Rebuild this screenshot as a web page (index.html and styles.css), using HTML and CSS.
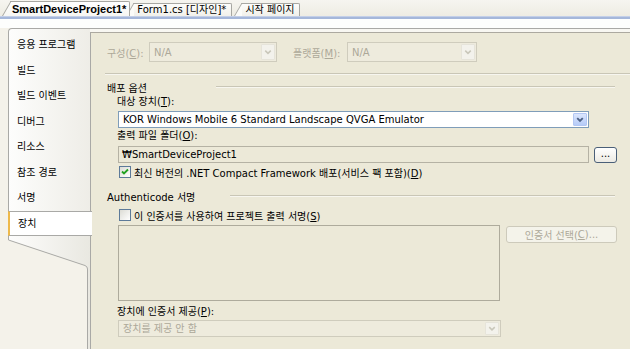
FILE: index.html
```html
<!DOCTYPE html>
<html lang="ko">
<head>
  <meta charset="UTF-8" />
  <title>SmartDeviceProject1 - 장치</title>
  <link rel="stylesheet" href="styles.css">
</head>
<body>
  <!-- 문서 탭 -->
  <div class="tabs">
    <div class="tab active">SmartDeviceProject1*</div>
    <div class="tab tab-form">Form1.cs [디자인]*</div>
    <div class="tab tab-start">시작 페이지</div>
  </div>
  <div class="tabline"></div>
  <div class="band"></div>

  <div class="frame">
    <!-- 왼쪽 속성 페이지 목록 -->
    <nav class="sidebar">
      <div class="navlist">
        <div class="navitem">응용 프로그램</div>
        <div class="navitem">빌드</div>
        <div class="navitem">빌드 이벤트</div>
        <div class="navitem">디버그</div>
        <div class="navitem">리소스</div>
        <div class="navitem">참조 경로</div>
        <div class="navitem">서명</div>
        <div class="navitem selected">장치</div>
      </div>
      <svg class="navtail" width="82" height="113" viewBox="0 0 82 113">
        <defs>
          <linearGradient id="tailbg" x1="0" x2="1" y1="0" y2="0">
            <stop offset="0" stop-color="#fdfdfc"/>
            <stop offset="1" stop-color="#e9e8e1"/>
          </linearGradient>
        </defs>
        <path d="M0,0 H82 V113 H79.5 V33 Q79.5,30.5 77,29.5 L0.5,4 Z" fill="url(#tailbg)"/>
        <path d="M0.5,0 V4 L77,29.5 Q79.5,30.5 79.5,33 V113" fill="none" stroke="#a9a9a6"/>
      </svg>
    </nav>

    <!-- 장치 페이지 -->
    <div class="content">
      <div class="panel">
        <div class="config-row">
          <span class="cfg-label disabled">구성(<u>C</u>):</span>
          <div class="combo combo-disabled combo-cfg">
            <span class="combo-text">N/A</span>
            <span class="combo-btn">
              <svg width="13" height="14" viewBox="0 0 13 14"><path d="M3.5,5.5 L6.5,8.5 L9.5,5.5" fill="none" stroke="#c9c7ba" stroke-width="1.6"/></svg>
            </span>
          </div>
          <span class="cfg-label cfg-label-wide disabled">플랫폼(<u>M</u>):</span>
          <div class="combo combo-disabled combo-plat">
            <span class="combo-text">N/A</span>
            <span class="combo-btn">
              <svg width="13" height="14" viewBox="0 0 13 14"><path d="M3.5,5.5 L6.5,8.5 L9.5,5.5" fill="none" stroke="#c9c7ba" stroke-width="1.6"/></svg>
            </span>
          </div>
        </div>

        <div class="sep"></div>

        <section class="group">
          <div class="group-title">
            <span class="title-text title-deploy">배포 옵션</span>
            <span class="rule"></span>
          </div>
          <div class="group-body">
            <span class="field-label">대상 장치(<u>T</u>):</span>
            <div class="combo combo-device">
              <span class="combo-text">KOR Windows Mobile 6 Standard Landscape QVGA Emulator</span>
              <span class="combo-btn combo-btn-blue">
                <svg width="13" height="15" viewBox="0 0 13 15"><path d="M3.5,6 L6.5,9 L9.5,6" fill="none" stroke="#4d6185" stroke-width="2"/></svg>
              </span>
            </div>

            <span class="field-label label-folder">출력 파일 폴더(<u>O</u>):</span>
            <div class="folder-row">
              <div class="textbox">₩SmartDeviceProject1</div>
              <div class="btn btn-browse">...</div>
            </div>

            <div class="check-row check-deploy">
              <span class="checkbox checked">
                <svg width="10" height="10" viewBox="0 0 10 10"><path d="M2,4.5 L4,6.5 L8,2.5" fill="none" stroke="#21a121" stroke-width="1.8"/></svg>
              </span>
              <span>최신 버전의 .NET Compact Framework 배포(서비스 팩 포함)(<u>D</u>)</span>
            </div>
          </div>
        </section>

        <section class="group group-sign">
          <div class="group-title">
            <span class="title-text title-sign">Authenticode 서명</span>
            <span class="rule"></span>
          </div>
          <div class="group-body">
            <div class="check-row check-sign">
              <span class="checkbox"></span>
              <span>이 인증서를 사용하여 프로젝트 출력 서명(<u>S</u>)</span>
            </div>

            <div class="cert-row">
              <div class="cert-box"></div>
              <div class="btn btn-disabled btn-cert">인증서 선택(<u>C</u>)...</div>
            </div>

            <span class="field-label label-provide">장치에 인증서 제공(<u>P</u>):</span>
            <div class="combo combo-disabled combo-provide">
              <span class="combo-text">장치를 제공 안 함</span>
              <span class="combo-btn">
                <svg width="13" height="15" viewBox="0 0 13 15"><path d="M3.5,6 L6.5,9 L9.5,6" fill="none" stroke="#c9c7ba" stroke-width="1.6"/></svg>
              </span>
            </div>
          </div>
        </section>
      </div>
    </div>
  </div>
</body>
</html>
```

FILE: styles.css
```css
* {
  margin: 0;
  padding: 0;
  box-sizing: border-box;
}

body {
  width: 630px;
  height: 349px;
  overflow: hidden;
  background: #f4f2ea;
  font-family: "DejaVu Sans", "Noto Sans CJK KR", sans-serif;
  font-size: 10px;
  color: #000;
}

u {
  text-decoration: underline;
}

.disabled {
  color: #aca899;
}

/* 문서 탭 */
.tabs {
  position: relative;
  z-index: 0;
  height: 16px;
  display: flex;
  align-items: flex-end;
  padding-left: 10px;
  background: linear-gradient(#f6f5f0, #eeece3);
}

.tab {
  position: relative;
  height: 13px;
  line-height: 12px;
  padding: 0 5px 0 3px;
  margin-left: 4px;
  border-top: 1px solid #a7a7a2;
  border-right: 1px solid #a7a7a2;
  border-top-right-radius: 2px;
  background: linear-gradient(#fdfdfb, #f1f0ea);
  white-space: nowrap;
}

.tab::before {
  content: "";
  position: absolute;
  top: -1px;
  bottom: 0;
  left: -8px;
  width: 12px;
  border-top: 1px solid #a7a7a2;
  border-left: 1px solid #a7a7a2;
  background: #fbfbf8;
  transform: skewX(-30deg);
  transform-origin: bottom left;
  z-index: -1;
}

.tab.active {
  margin-left: 0;
  height: 15px;
  line-height: 14px;
  padding: 0 3px 0 2px;
  font-family: "Liberation Sans", "Noto Sans CJK KR", sans-serif;
  font-size: 11px;
  font-weight: bold;
  background: linear-gradient(#ffffff, #f6f6f2);
  z-index: 2;
}

.tab.active::before {
  background: linear-gradient(#ffffff, #f6f6f2);
}

.tab-start {
  margin-left: 10px;
  padding-right: 4px;
}

.tabline {
  height: 3px;
  background: #a5b7da;
  border-top: 1px solid #c3cfe8;
}

.band {
  height: 9px;
  background: #fdfefd;
}

/* 본문 */
.frame {
  display: flex;
  height: 321px;
}

.sidebar {
  width: 90px;
  padding-left: 8px;
  display: flex;
  flex-direction: column;
  position: relative;
  z-index: 1;
}

.navlist {
  border-top: 1px solid #a9a9a6;
  border-left: 1px solid #a9a9a6;
  border-top-left-radius: 4px;
  padding-top: 3px;
  background: linear-gradient(to right, #fdfdfc, #eeede7);
}

.navitem {
  height: 25.5px;
  line-height: 25px;
  padding-left: 8px;
  white-space: nowrap;
}

.navitem.selected {
  margin-left: -1px;
  margin-right: -2px;
  padding-left: 8px;
  background: #fff;
  border-top: 1px solid #a9a9a6;
  border-bottom: 1px solid #a9a9a6;
  border-left: 2px solid #eeb94a;
  line-height: 23px;
}

.navtail {
  display: block;
}

.content {
  flex: 1;
  display: flex;
  flex-direction: column;
  border-top: 1px solid #a9a9a6;
  padding-top: 3px;
  background: #f8f7f2;
}

.panel {
  flex: 1;
  border-top: 1px solid #aca9a0;
  border-left: 1px solid #a9a9a6;
  background: #ece9d8;
  padding: 9px 13px 0 16px;
}

/* 구성 / 플랫폼 */
.config-row {
  display: flex;
  align-items: center;
  height: 20px;
}

.cfg-label {
  width: 42px;
  white-space: nowrap;
}

.cfg-label-wide {
  width: 54px;
  margin-left: 16px;
}

.combo {
  display: flex;
  align-items: center;
  height: 17px;
  border: 1px solid #7f9db9;
  background: #fff;
  padding: 1px;
}

.combo-text {
  flex: 1;
  padding-left: 3px;
  white-space: nowrap;
  overflow: hidden;
  line-height: 13px;
}

.combo-btn {
  display: flex;
  align-items: center;
  justify-content: center;
  width: 14px;
  height: 100%;
  background: #f3f2ec;
  border: 1px solid #e6e4da;
  border-radius: 1px;
}

.combo-btn-blue {
  background: linear-gradient(#dbe6fd, #b6cbf7);
  border-color: #b3c7f4;
}

.combo-disabled {
  border-color: #cfccbd;
  background: #eeebdd;
  color: #aca899;
}

.combo-cfg {
  width: 128px;
  height: 20px;
}

.combo-plat {
  width: 130px;
  height: 20px;
}

.sep {
  margin: 11px -13px 0 -2px;
  border-top: 1px solid #c9c6b6;
  border-bottom: 1px solid #f7f6ef;
}

/* 그룹 */
.group-title {
  display: flex;
  align-items: center;
  height: 14px;
  margin-top: 5px;
  margin-right: 2px;
}

.title-text {
  white-space: nowrap;
}

.title-deploy {
  width: 109px;
}

.title-sign {
  width: 123px;
}

.rule {
  flex: 1;
  border-top: 1px solid #c9c6b6;
  border-bottom: 1px solid #f7f6ef;
}

.group-body {
  padding-left: 10px;
}

.field-label {
  display: block;
  height: 14px;
  line-height: 14px;
  margin-top: 1px;
  white-space: nowrap;
}

.combo-device {
  margin: 2px 28px 0 1px;
}

.label-folder {
  margin-top: 1px;
}

.folder-row {
  display: flex;
  align-items: flex-start;
  gap: 5px;
  margin: 3px 0 0 1px;
}

.textbox {
  flex: 1;
  height: 17px;
  line-height: 15px;
  padding-left: 3px;
  border: 1px solid #b5b2a4;
  background: #ece9d8;
  white-space: nowrap;
}

.btn {
  display: flex;
  align-items: center;
  justify-content: center;
  border-radius: 3px;
  white-space: nowrap;
}

.btn-browse {
  width: 23px;
  height: 16px;
  margin-top: 1px;
  border: 1px solid #4a5f78;
  background: linear-gradient(#ffffff, #eceae3);
  line-height: 10px;
  padding-bottom: 3px;
}

.check-row {
  display: flex;
  align-items: center;
  gap: 3px;
  height: 14px;
  padding-left: 2px;
  white-space: nowrap;
}

.check-deploy {
  margin-top: 2px;
}

.checkbox {
  display: flex;
  align-items: center;
  justify-content: center;
  width: 12px;
  height: 12px;
  border: 1px solid #5d7a99;
  background: linear-gradient(135deg, #dcdcd5, #ffffff);
}

.group-sign {
  margin-top: 10px;
}

.check-sign {
  margin-top: 5px;
}

.cert-row {
  display: flex;
  align-items: flex-start;
  gap: 6px;
  margin: 3px 0 0 1px;
}

.cert-box {
  width: 382px;
  height: 76px;
  border: 1px solid #aeab9c;
  background: #ece9d8;
}

.btn-disabled {
  border: 1px solid #cdcabb;
  background: #f4f3ea;
  color: #aca899;
}

.btn-cert {
  flex: 1;
  height: 17px;
  margin-top: 1px;
}

.label-provide {
  margin-top: 4px;
}

.combo-provide {
  width: 383px;
  margin: 1px 0 0 1px;
}
```
